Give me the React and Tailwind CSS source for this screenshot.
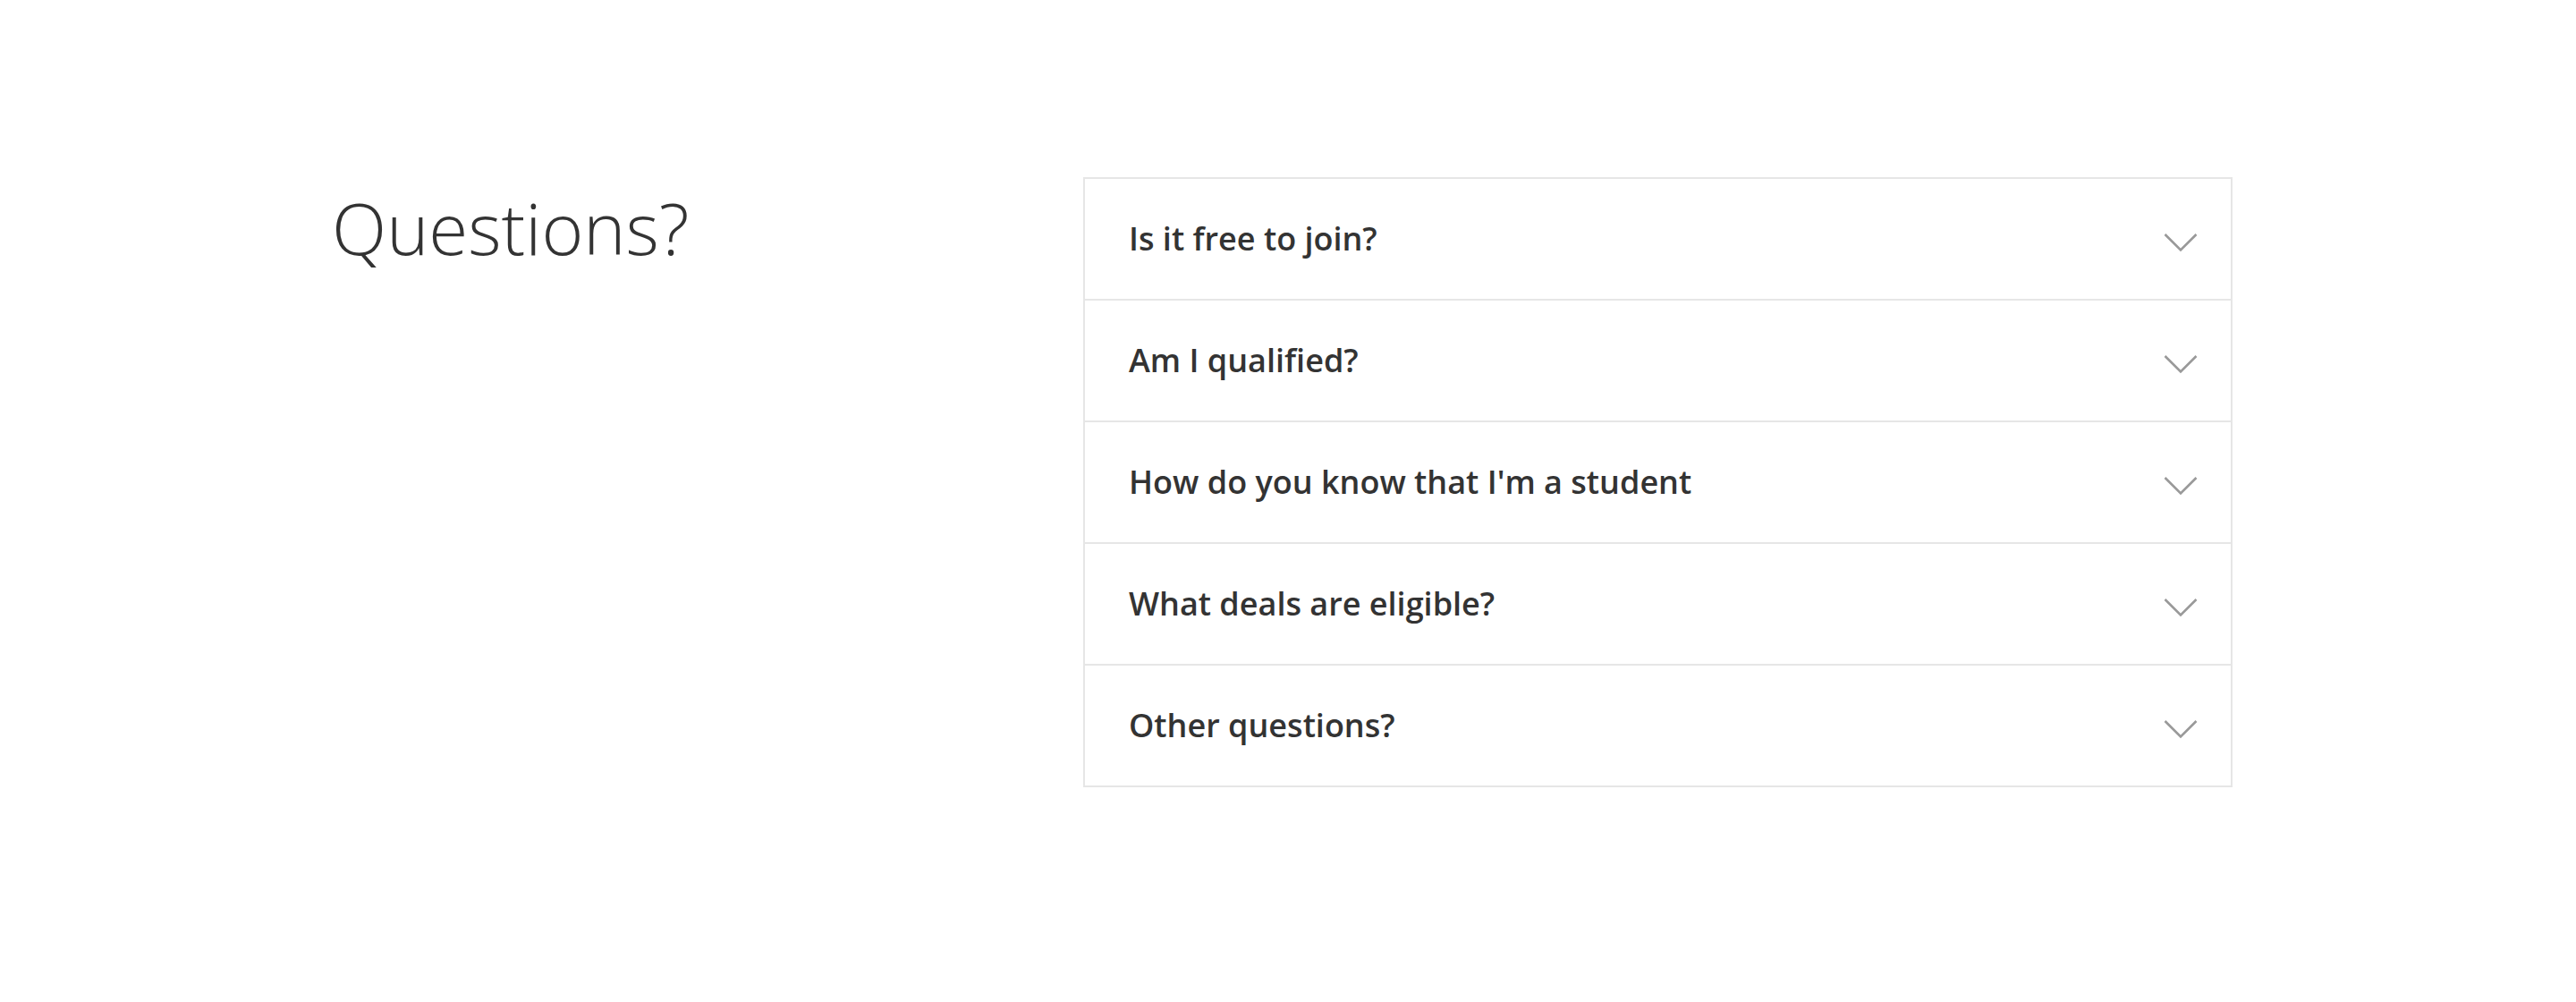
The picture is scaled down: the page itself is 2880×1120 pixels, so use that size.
import React from "react";

const questions = [
  "Is it free to join?",
  "Am I qualified?",
  "How do you know that I'm a student",
  "What deals are eligible?",
  "Other questions?",
];

function Chevron() {
  return (
    <svg width="38" height="22" viewBox="0 0 38 22" fill="none" className="mt-2 shrink-0">
      <polyline points="1.5,2 19,19.5 36.5,2" stroke="#999999" strokeWidth="2.6" fill="none" />
    </svg>
  );
}

export default function App() {
  return (
    <div className="min-h-[1120px] w-[2880px] bg-white" style={{ fontFamily: '"Open Sans", sans-serif' }}>
      <div className="flex items-start pt-[198px] pl-[371px]">
        <h2 className="w-[840px] shrink-0 pt-[16px] text-[80px] font-light leading-none text-[#333333]">
          Questions?
        </h2>
        <div className="w-[1285px] border-x-2 border-b-2 border-[#e6e6e6]">
          {questions.map((q) => (
            <div
              key={q}
              className="flex h-[136px] items-center justify-between border-t-2 border-[#e6e6e6] pl-[49px] pr-[37px]"
            >
              <span className="text-[36px] font-semibold text-[#333333]">{q}</span>
              <Chevron />
            </div>
          ))}
        </div>
      </div>
    </div>
  );
}
